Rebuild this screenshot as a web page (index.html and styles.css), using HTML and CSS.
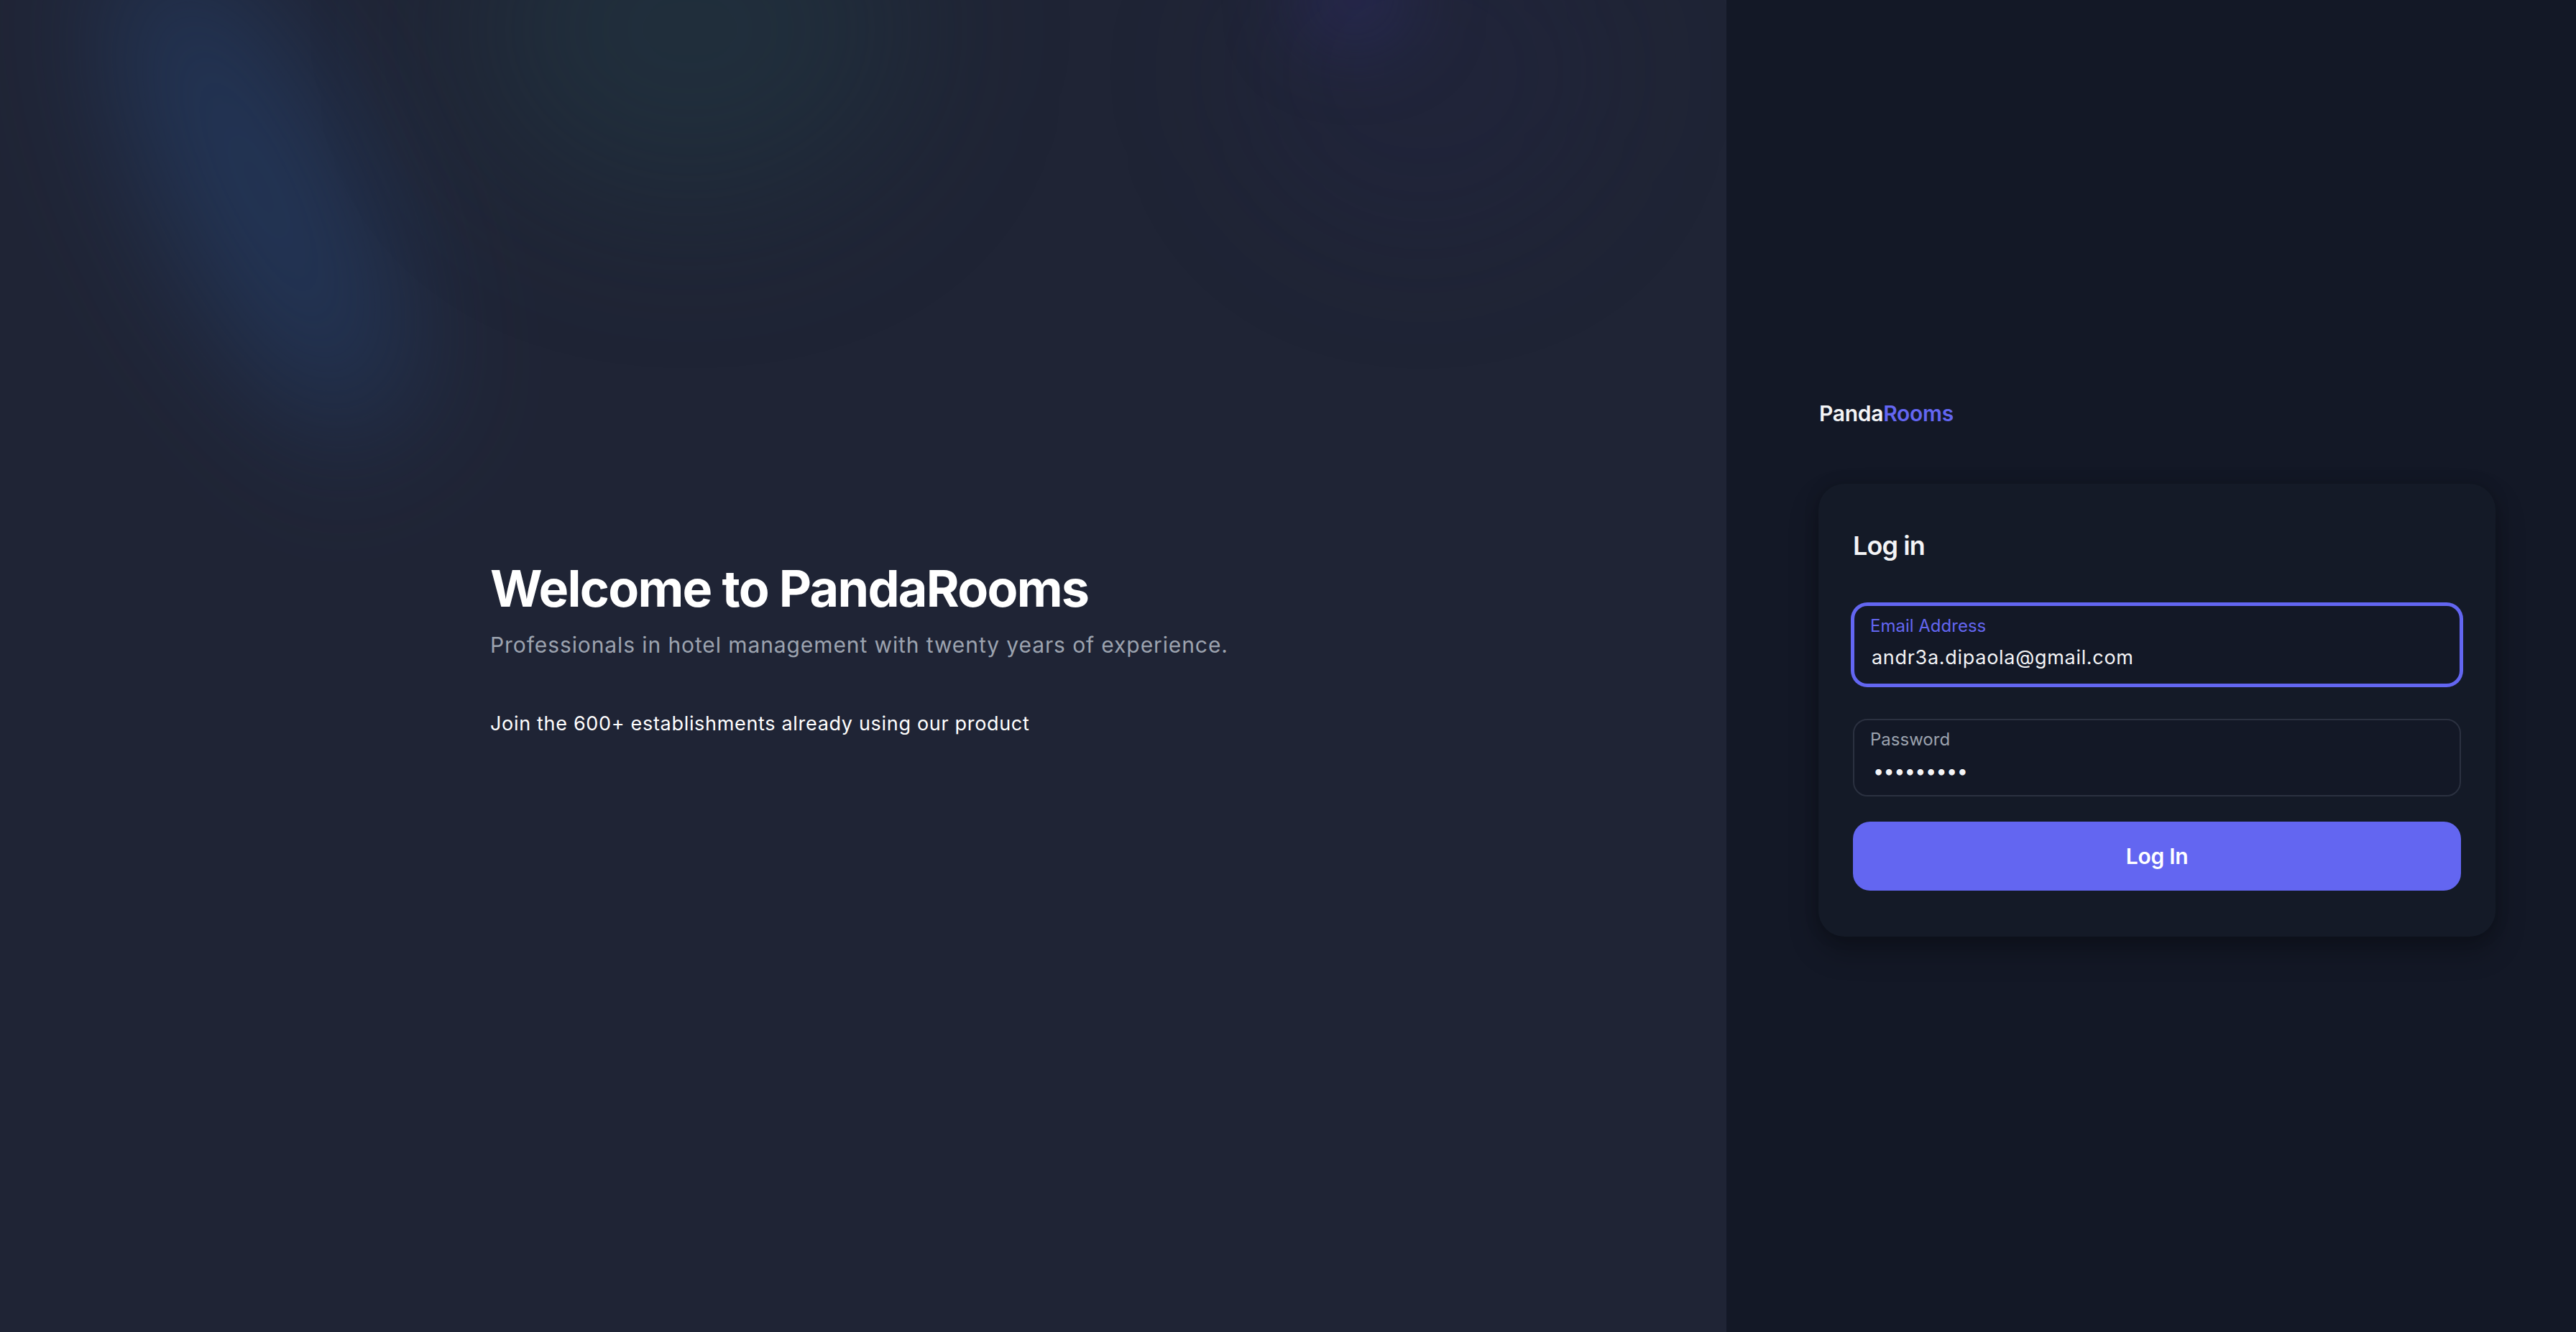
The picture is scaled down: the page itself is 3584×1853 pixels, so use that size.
FILE: index.html
```html
<!DOCTYPE html>
<html lang="en">
<head>
<meta charset="utf-8">
<title>PandaRooms – Log in</title>
<link rel="stylesheet" href="styles.css">
</head>
<body>
<div class="page">
  <section class="hero">
    <div class="glow glow-blue"></div>
    <div class="glow glow-teal"></div>
    <div class="glow glow-purple"></div>
    <div class="glow glow-halo"></div>
    <div class="hero-content">
      <h1 class="hero-title">Welcome to PandaRooms</h1>
      <p class="hero-subtitle">Professionals in hotel management with twenty years of experience.</p>
      <p class="hero-note">Join the 600+ establishments already using our product</p>
    </div>
  </section>
  <aside class="auth">
    <div class="logo"><span class="logo-a">Panda</span><span class="logo-b">Rooms</span></div>
    <form class="card">
      <h2 class="card-title">Log in</h2>
      <div class="field field-focus">
        <span class="field-label">Email Address</span>
        <span class="field-value">andr3a.dipaola@gmail.com</span>
      </div>
      <div class="field field-password">
        <span class="field-label">Password</span>
        <span class="field-value dots">•••••••••</span>
      </div>
      <button type="button" class="btn">Log In</button>
    </form>
  </aside>
</div>
</body>
</html>
```
FILE: styles.css
```css
* { box-sizing: border-box; }
html, body { margin: 0; padding: 0; }
body {
  font-family: "Inter", "Noto Sans", sans-serif;
  background: #131826;
  color: #f3f4f6;
}
.page {
  display: flex;
  height: 1853px;
  overflow: hidden;
}
.hero {
  position: relative;
  flex: 0 0 2402px;
  background: #1f2435;
  display: flex;
  flex-direction: column;
  justify-content: center;
  align-items: center;
  padding-bottom: 50px;
  overflow: hidden;
}
.glow {
  position: absolute;
  border-radius: 50%;
  pointer-events: none;
}
.glow-blue {
  left: 230px;
  top: -120px;
  width: 260px;
  height: 760px;
  background: rgba(38, 70, 120, 0.5);
  transform: rotate(-26deg);
  filter: blur(90px);
}
.glow-teal {
  left: 660px;
  top: -200px;
  width: 600px;
  height: 480px;
  background: rgba(36, 66, 72, 0.34);
  filter: blur(110px);
}
.glow-purple {
  left: 1800px;
  top: -70px;
  width: 170px;
  height: 140px;
  background: rgba(52, 48, 120, 0.36);
  filter: blur(50px);
}
.glow-halo {
  left: 1720px;
  top: -140px;
  width: 520px;
  height: 480px;
  background: rgba(38, 38, 82, 0.16);
  filter: blur(90px);
}
.hero-content {
  position: relative;
  width: 1038px;
}
.hero-title {
  margin: 0;
  font-size: 70px;
  line-height: 77px;
  font-weight: 700;
  letter-spacing: -1.7px;
  color: #ffffff;
}
.hero-subtitle {
  margin: 19px 0 0;
  font-size: 30px;
  line-height: 42px;
  font-weight: 400;
  letter-spacing: 0.9px;
  color: #9ca3af;
}
.hero-note {
  margin: 73px 0 0;
  font-size: 27px;
  line-height: 32px;
  font-weight: 400;
  letter-spacing: 0.68px;
  color: #ffffff;
}
.auth {
  flex: 1 1 auto;
  background: #131826;
  display: flex;
  flex-direction: column;
  justify-content: center;
  padding: 6px 112px 0 128px;
}
.logo {
  font-size: 30px;
  line-height: 36px;
  font-weight: 600;
  letter-spacing: -0.3px;
  margin-bottom: 80px;
  padding-left: 1px;
}
.logo-a { color: #f3f4f6; }
.logo-b { color: #6366f1; }
.card {
  background: #141a27;
  border-radius: 36px;
  padding: 64px 48px 64px;
  box-shadow: 0 20px 40px rgba(0, 0, 0, 0.28), 0 0 20px rgba(0, 0, 0, 0.18);
  display: flex;
  flex-direction: column;
}
.card-title {
  margin: 0 0 60px;
  font-size: 36px;
  line-height: 44px;
  font-weight: 600;
  letter-spacing: -0.9px;
  color: #f3f4f6;
}
.field {
  display: flex;
  flex-direction: column;
  gap: 10px;
  height: 108px;
  padding: 11px 22px 0;
  border: 2px solid #2b3140;
  border-radius: 20px;
  background: #131826;
}
.field-focus {
  height: 112px;
  padding-top: 12px;
  border-color: #6366f1;
  box-shadow: 0 0 0 3px #6366f1;
  margin-bottom: 47px;
}
.field-password { margin-bottom: 35px; }
.field-label {
  font-size: 24px;
  line-height: 32px;
  color: #9ca3af;
}
.field-focus .field-label { color: #6366f1; }
.field-value {
  font-size: 27px;
  line-height: 36px;
  color: #f3f4f6;
  padding-left: 2px;
  letter-spacing: 0.7px;
}
.dots {
  letter-spacing: -0.6px;
  padding-left: 4px;
}
.btn {
  height: 96px;
  border: 0;
  border-radius: 24px;
  background: #6366f1;
  color: #ffffff;
  font-family: "Inter", "Noto Sans", sans-serif;
  font-size: 30px;
  font-weight: 600;
  letter-spacing: -0.3px;
  cursor: pointer;
}
```
